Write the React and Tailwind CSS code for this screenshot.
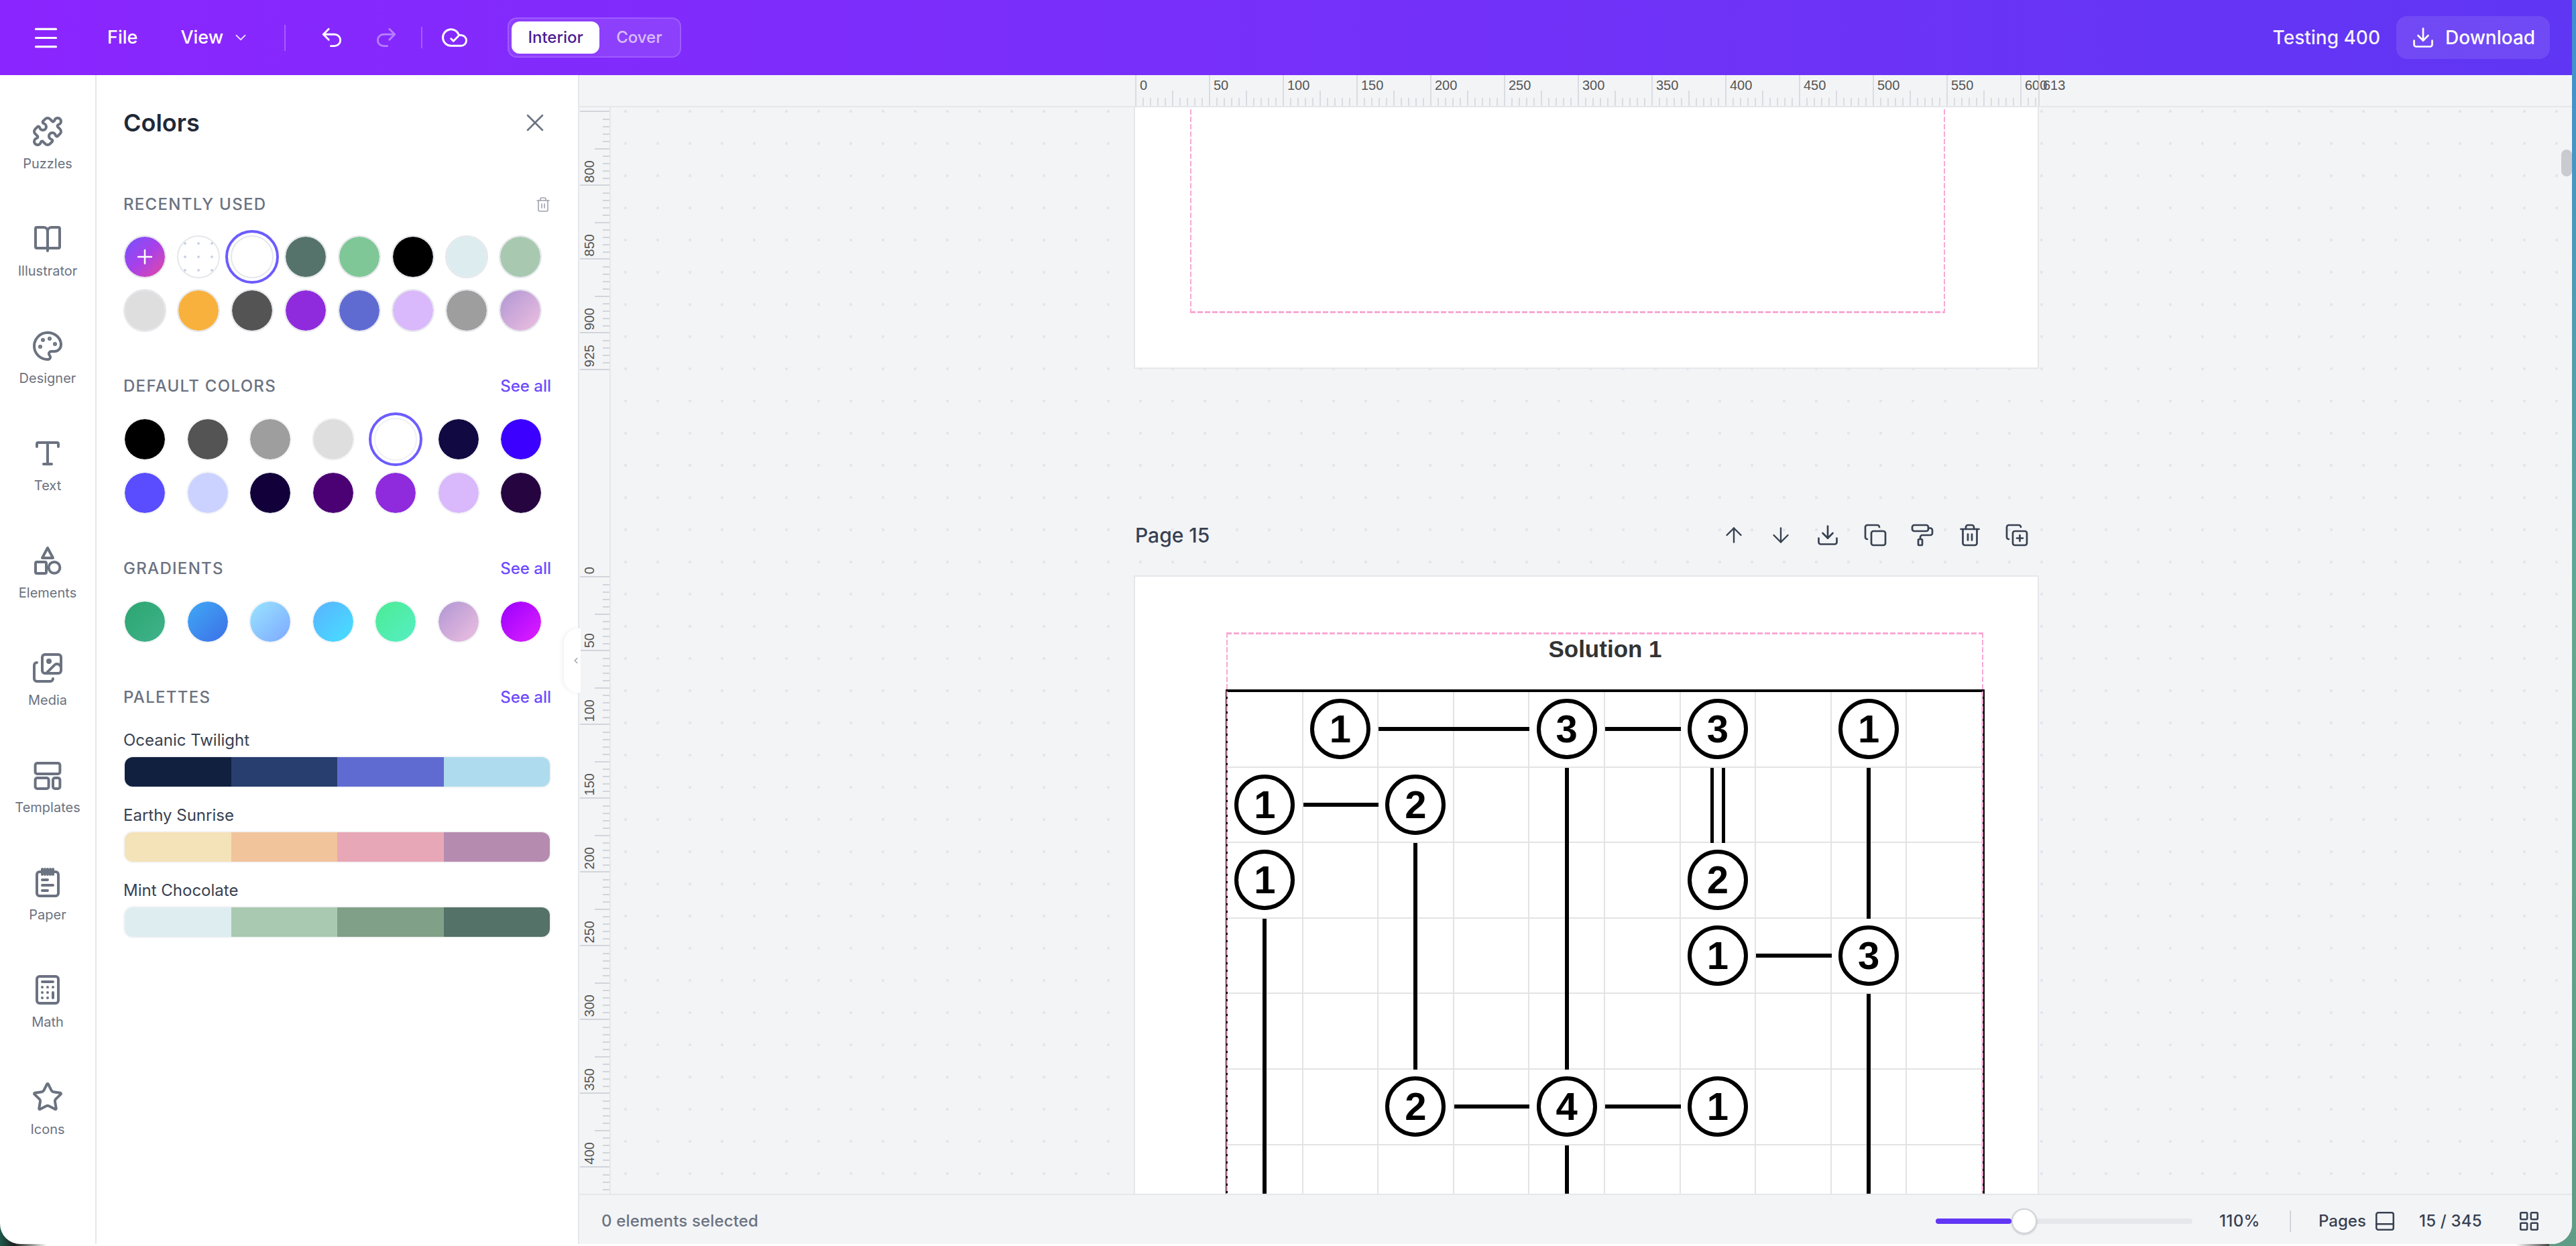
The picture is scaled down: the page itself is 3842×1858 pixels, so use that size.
import React from "react";
import {
  Menu, ChevronDown, Undo2, Redo2, Download, X, Trash2, Plus, Puzzle, Palette, Type, Images, Calculator, Star,
  ArrowUp, ArrowDown, PaintRoller, CopyPlus, Copy, PanelBottom, LayoutGrid, ChevronLeft,
} from "lucide-react";

const Svg = ({ size = 48, sw = 2, children }) => (
  <svg width={size} height={size} viewBox="0 0 24 24" fill="none" stroke="currentColor" strokeWidth={sw} strokeLinecap="round" strokeLinejoin="round">
    {children}
  </svg>
);
const BookIcon = () => (
  <Svg>
    <path d="M12 6.5V21" />
    <path d="M4 3.5h5a3 3 0 0 1 3 3 3 3 0 0 1 3-3h5a1 1 0 0 1 1 1V18a1 1 0 0 1-1 1H4a1 1 0 0 1-1-1V4.5a1 1 0 0 1 1-1z" />
  </Svg>
);
const ElementsIcon = () => (
  <Svg>
    <path d="M12 2.5 16 10H8z" />
    <rect x="3" y="13" width="8" height="8.5" rx="1" />
    <circle cx="17" cy="17.2" r="4.2" />
  </Svg>
);
const TemplatesIcon = () => (
  <Svg>
    <rect x="2.8" y="3" width="18.4" height="8" rx="1.5" />
    <rect x="2.8" y="14" width="10" height="8" rx="1.5" />
    <rect x="16" y="14" width="5.2" height="8" rx="1.5" />
  </Svg>
);
const PaperIcon = () => (
  <Svg>
    <rect x="4" y="4" width="16" height="18" rx="2" />
    <path d="M8 2v4M12 2v4M16 2v4M10 2v4M14 2v4" />
    <path d="M8 10h4M8 14h8M8 18h4" />
  </Svg>
);
const CloudCheckIcon = () => (
  <Svg size={42} sw={1.7}>
    <path d="M17.5 19H9a7 7 0 1 1 6.71-9h1.79a4.5 4.5 0 1 1 0 9Z" />
    <path d="m9 13 2 2 4-4" />
  </Svg>
);

const sideItems = [
  ["Puzzles", <Puzzle size={48} strokeWidth={2} />],
  ["Illustrator", <BookIcon />],
  ["Designer", <Palette size={48} strokeWidth={2} />],
  ["Text", <Type size={48} strokeWidth={2} />],
  ["Elements", <ElementsIcon />],
  ["Media", <Images size={48} strokeWidth={2} />],
  ["Templates", <TemplatesIcon />],
  ["Paper", <PaperIcon />],
  ["Math", <Calculator size={48} strokeWidth={2} />],
  ["Icons", <Star size={48} strokeWidth={2} />],
];

const Swatch = ({ c, g, faint }) => (
  <div
    className={`h-[64px] w-[64px] rounded-full border-2 ${faint ? "border-[#f3f4f6]" : "border-[#e5e7eb]"}`}
    style={{ background: g ? `linear-gradient(135deg, ${g[0]}, ${g[1]})` : c, backgroundClip: "padding-box" }}
  />
);
const Selected = ({ faint }) => (
  <div className="relative h-[64px] w-[64px]">
    <div className="absolute -inset-[8px] rounded-full border-[4px] border-[#6c5cff]" />
    <div className={`h-[64px] w-[64px] rounded-full border-2 bg-white ${faint ? "border-[#f0f1f5]" : "border-[#e5e7eb]"}`} />
  </div>
);

const recent2 = ["#dedede", "#f8b13c", "#545454", "#8f2bdc", "#606bd2", "#d9b8fb", "#9e9e9e"];
const recent1 = ["#55736a", "#7fc797", "#000000", "#dcecef", "#a8c9b0"];
const def1 = ["#000000", "#545454", "#9e9e9e", "#dedede", null, "#110a42", "#3b00ff"];
const def2 = ["#5a4dff", "#cbd2ff", "#12003a", "#4b0074", "#8f2bdc", "#d9b8fb", "#26043f"];
const grads = [
  ["#2ca56f", "#40b38c"], ["#3fa9f5", "#3d6fe8"], ["#9ae5ff", "#7da9ff"], ["#5ab2ff", "#45e0ff"],
  ["#4ceb94", "#55efc4"], ["#b096d4", "#eec0e0"], ["#9900ff", "#e020ff"],
];
const palettes = [
  ["Oceanic Twilight", ["#11203f", "#283e6f", "#606bd2", "#aedbed"]],
  ["Earthy Sunrise", ["#f4e2b8", "#f1c49c", "#e8a7b6", "#b58caf"]],
  ["Mint Chocolate", ["#deedf0", "#a9c9b0", "#80a187", "#557268"]],
];

const SectionHead = ({ title, className, right }) => (
  <div className={`flex h-[32px] items-center justify-between ${className}`}>
    <span className="text-[24px] font-medium uppercase leading-[32px] tracking-[1.3px] text-[#6b7280]">{title}</span>
    {right === undefined ? <span className="text-[24px] font-medium leading-[32px] text-[#6d4aff]">See all</span> : right}
  </div>
);

const TOP_CELLS = [0, 50, 100, 150, 200, 250, 300, 350, 400, 450, 500, 550, 600];
const HCell = ({ label, w = 110, ticks = true }) => (
  <div className="relative h-[46px] shrink-0" style={{ width: w }}>
    <svg className="absolute inset-0" width={Math.max(w, 2)} height="46" stroke="#d1d5db" strokeWidth="1.5">
      <line x1="1" y1="0" x2="1" y2="46" />
      {ticks && [11, 22, 33, 44, 55, 66, 77, 88, 99].map((x) => (
        <line key={x} x1={x + 1} x2={x + 1} y1={x === 55 ? 23 : 34} y2="46" />
      ))}
    </svg>
    <span className="absolute left-[7px] top-[3px] text-[20px] leading-[24px] text-[#555] [font-family:'Liberation_Sans',sans-serif]">{label}</span>
  </div>
);
const VCell = ({ label, h = 110, ticks = true, major = true }) => {
  const ys = [];
  if (ticks) for (let y = 11; y < Math.min(h, 110) - 1; y += 11) ys.push(y);
  return (
    <div className="relative w-[45px] shrink-0 overflow-hidden" style={{ height: h }}>
      <svg className="absolute inset-0" width="45" height={h} stroke="#d1d5db" strokeWidth="2">
        {ys.map((y) => (
          <line key={y} x1={y === 55 ? 23 : 35} x2="45" y1={y} y2={y} />
        ))}
        {major && <line x1="1" x2="45" y1={h - 1} y2={h - 1} />}
      </svg>
      {label && (
        <span className="absolute bottom-[5px] left-[5px] rotate-180 text-[20px] leading-[20px] text-[#555] [writing-mode:vertical-rl] [font-family:'Liberation_Sans',sans-serif]">
          {label}
        </span>
      )}
    </div>
  );
};

/* the page-margin guides: pink dashes with long strokes */
const GuideV = ({ className }) => (
  <div className={`absolute w-[2px] bg-[repeating-linear-gradient(to_bottom,#f9a8d4_0,#f9a8d4_8px,transparent_8px,transparent_11px)] ${className}`} />
);
const GuideH = ({ className }) => (
  <div className={`absolute h-[3px] bg-[repeating-linear-gradient(to_right,#f9a8d4_0,#f9a8d4_8px,transparent_8px,transparent_11px)] ${className}`} />
);

const Node = ({ n }) => (
  <div className="absolute left-1/2 top-1/2 z-10 flex h-[90px] w-[90px] -translate-x-1/2 -translate-y-1/2 items-center justify-center rounded-full border-[6px] border-black bg-white text-[58px] font-bold leading-none text-black [font-family:'Liberation_Sans',sans-serif]">
    {n}
  </div>
);
const H = () => <div className="absolute left-0 -right-[2px] top-1/2 h-[6px] -translate-y-1/2 bg-black" />;
const V = () => <div className="absolute -bottom-[2px] top-0 left-1/2 w-[6px] -translate-x-1/2 bg-black" />;
const VV = () => (
  <div className="absolute -bottom-[2px] top-0 left-1/2 flex w-[22px] -translate-x-1/2 justify-between">
    <div className="w-[5px] bg-black" />
    <div className="w-[5px] bg-black" />
  </div>
);

const rows = [
  [".", 1, "h", "h", 3, "h", 3, ".", 1, "."],
  [1, "h", 2, ".", "v", ".", "w", ".", "v", "."],
  [1, ".", "v", ".", "v", ".", 2, ".", "v", "."],
  ["v", ".", "v", ".", "v", ".", 1, "h", 3, "."],
  ["v", ".", "v", ".", "v", ".", ".", ".", "v", "."],
  ["v", ".", 2, "h", 4, "h", 1, ".", "v", "."],
  ["v", ".", ".", ".", "v", ".", ".", ".", "v", "."],
  ["v", ".", ".", ".", "v", ".", ".", ".", "v", "."],
];

const Cell = ({ t }) => (
  <div className="relative h-[112.6px] border-b-2 border-r-2 border-[#e3e3e3]">
    {typeof t === "number" && <Node n={t} />}
    {t === "h" && <H />}
    {t === "v" && <V />}
    {t === "w" && <VV />}
  </div>
);

export default function App() {
  return (
    <div className="relative h-[1858px] w-[3842px] overflow-hidden bg-white [font-family:Inter,sans-serif]">
      {/* desktop showing round the window's edge */}
      <div className="absolute bottom-0 left-0 h-[40px] w-full bg-[linear-gradient(to_right,#1f5a4c_0,#1c1c1c_22px,#ffffff_70px,#ffffff_calc(100%-90px),#1c1c1c_calc(100%-30px),#1c1c1c_100%)]" />
      <div className="absolute right-0 top-0 h-full w-[40px] bg-gradient-to-b from-[#3f8fd2] via-[#62a88f] to-[#5f9c86]" />

      <div className="relative flex h-[1855px] w-[3836px] flex-col overflow-hidden rounded-b-[30px] bg-white">
        {/* top bar */}
        <header className="flex h-[112px] shrink-0 items-center bg-gradient-to-r from-[#8b25ff] to-[#5f36f3] text-white">
          <div className="ml-[46px] flex h-[45px] w-[45px] items-center justify-center">
            <Menu size={45} strokeWidth={1.7} />
          </div>
          <span className="ml-[69px] text-[27px] font-medium">File</span>
          <span className="ml-[64px] text-[27px] font-medium">View</span>
          <ChevronDown className="ml-[13px] opacity-80" size={26} strokeWidth={1.8} />
          <div className="ml-[52px] h-[39px] w-[2px] bg-white/25" />
          <Undo2 className="ml-[50px]" size={38} strokeWidth={1.8} />
          <Redo2 className="ml-[43px] opacity-40" size={38} strokeWidth={1.8} />
          <div className="ml-[33px] h-[32px] w-[2px] bg-white/25" />
          <div className="ml-[27px]"><CloudCheckIcon /></div>
          <div className="ml-[58px] flex h-[60px] w-[259px] items-center rounded-[14px] border-2 border-white/15 bg-white/10 pl-[4px]">
            <div className="flex h-[48px] w-[131px] items-center justify-center rounded-[12px] bg-white text-[24px] font-medium text-[#4c1d95]">Interior</div>
            <span className="ml-[25px] text-[24px] font-medium text-white/65">Cover</span>
          </div>
          <span className="ml-auto text-[28px] font-medium text-white/95">Testing 400</span>
          <button className="ml-[24px] mr-[33px] flex h-[64px] w-[229px] items-center rounded-[16px] bg-white/10 pl-[22px] text-[28px] font-medium">
            <Download size={36} strokeWidth={1.8} />
            <span className="ml-[15px]">Download</span>
          </button>
        </header>

        <main className="flex min-h-0 flex-1">
          {/* left rail */}
          <aside className="flex w-[144px] shrink-0 flex-col items-center gap-[74px] border-r-2 border-[#e5e7eb] pt-[60px] text-[#6b7280]">
            {sideItems.map(([label, icon]) => (
              <div key={label} className="flex flex-col items-center gap-[10px]">
                <div className="h-[48px] w-[48px]">{icon}</div>
                <span className="text-[20px] font-normal leading-[28px]">{label}</span>
              </div>
            ))}
          </aside>

          {/* colours panel */}
          <section className="relative w-[718px] shrink-0 pl-[40px] pr-[40px] pt-[49px]">
            <div className="flex h-[44px] items-center justify-between">
              <h2 className="text-[36px] font-semibold leading-[44px] text-[#1f2937]">Colors</h2>
              <X className="mr-[2px] text-[#6b7280]" size={44} strokeWidth={1.4} />
            </div>

            <SectionHead className="mt-[84px]" title="Recently used" right={<Trash2 className="text-[#9ca3af]" size={24} strokeWidth={1.6} />} />
            <div className="mt-[30px] grid grid-cols-[repeat(8,64px)] gap-[16px]">
              <div className="flex h-[64px] w-[64px] items-center justify-center rounded-full border-2 border-[#e5e7eb] bg-gradient-to-br from-[#7050ff] via-[#a83fe8] to-[#e63fa0] bg-clip-padding text-white">
                <Plus size={34} strokeWidth={1.8} />
              </div>
              <div className="h-[64px] w-[64px] rounded-full border-2 border-[#e5e7eb] bg-white bg-[radial-gradient(circle,#c4cfe6_1.5px,transparent_2px)] bg-[length:20px_20px]" />
              <Selected />
              {recent1.map((c) => <Swatch key={c} c={c} />)}
              {recent2.map((c) => <Swatch key={c} c={c} />)}
              <Swatch g={["#b096d4", "#eec0e0"]} />
            </div>

            <SectionHead className="mt-[65px]" title="Default colors" />
            <div className="mt-[31px] grid grid-cols-[repeat(7,64px)] justify-between gap-y-[16px] pr-[13px]">
              {def1.map((c, i) => (c ? <Swatch key={i} c={c} faint /> : <Selected key={i} faint />))}
              {def2.map((c, i) => <Swatch key={i} c={c} faint />)}
            </div>

            <SectionHead className="mt-[65px]" title="Gradients" />
            <div className="mt-[31px] grid grid-cols-[repeat(7,64px)] justify-between pr-[13px]">
              {grads.map((g, i) => <Swatch key={i} g={g} faint />)}
            </div>

            <SectionHead className="mt-[65px]" title="Palettes" />
            <div className="mt-[32px] flex flex-col gap-[25px]">
              {palettes.map(([name, cols]) => (
                <div key={name}>
                  <div className="text-[24px] leading-[32px] text-[#374151]">{name}</div>
                  <div className="mt-[7px] flex h-[48px] overflow-hidden rounded-[14px] border-2 border-[#f3f4f6]">
                    {cols.map((c) => <div key={c} className="flex-1" style={{ background: c }} />)}
                  </div>
                </div>
              ))}
            </div>

            <div className="absolute -right-[4px] top-[825px] z-20 flex h-[96px] w-[25px] items-center justify-end rounded-l-[22px] bg-white text-[#9ca3af] shadow-[-3px_0_6px_rgba(0,0,0,0.05)]">
              <ChevronLeft size={14} strokeWidth={2.5} />
            </div>
          </section>

          {/* work area */}
          <section className="relative flex min-w-0 flex-1 flex-col bg-[#f3f4f6]">
            <div className="flex h-[48px] shrink-0 border-b-2 border-l-2 border-[#e5e7eb]">
              <div className="flex pl-[829px]">
                {TOP_CELLS.map((n) => <HCell key={n} label={n} w={n === 600 ? 27 : 110} />)}
                <HCell label="613" w={2} ticks={false} />
              </div>
            </div>

            <div className="flex min-h-0 flex-1">
              <div className="w-[49px] shrink-0 overflow-hidden border-x-2 border-[#e5e7eb]">
                <VCell h={7} ticks={false} />
                <VCell label="800" />
                <VCell label="850" />
                <VCell label="900" />
                <VCell label="925" h={55} />
                <VCell label="0" h={309} ticks={false} />
                {[50, 100, 150, 200, 250, 300, 350, 400].map((n) => <VCell key={n} label={n} />)}
                <VCell h={39} major={false} />
              </div>

              <div className="min-w-0 flex-1 overflow-hidden bg-[radial-gradient(circle,#e3e6ec_2px,transparent_2.5px)] bg-[length:48px_48px] bg-[position:-2px_-18px] pl-[780px]">
                {/* page 14 tail */}
                <div className="h-[390px] w-[1350px] border-x-2 border-b-2 border-[#e5e7eb] bg-white pl-[82px]">
                  <div className="relative h-[307px] w-[1126px]">
                    <GuideV className="bottom-0 left-0 top-[3px]" />
                    <GuideV className="bottom-0 right-0 top-[3px]" />
                    <GuideH className="bottom-0 left-0 right-0" />
                  </div>
                </div>

                {/* page 15 toolbar */}
                <div className="mt-[216px] flex h-[64px] w-[1350px] items-center justify-between pl-[2px] pr-[15px]">
                  <span className="text-[30px] font-medium text-[#374151]">Page 15</span>
                  <div className="flex items-center gap-[34.4px] text-[#374151]">
                    <ArrowUp size={36} strokeWidth={1.6} />
                    <ArrowDown size={36} strokeWidth={1.6} />
                    <Download size={36} strokeWidth={1.8} />
                    <Copy size={36} strokeWidth={1.8} />
                    <PaintRoller size={36} strokeWidth={1.8} />
                    <Trash2 size={36} strokeWidth={1.8} />
                    <CopyPlus size={36} strokeWidth={1.8} />
                  </div>
                </div>

                {/* page 15 */}
                <div className="mt-[28px] w-[1350px] border-2 border-[#e5e7eb] bg-white pl-[135px] pt-[83px]">
                  <div className="relative w-[1132px]">
                    <GuideH className="left-[1px] right-[2px] top-0" />
                    <GuideV className="bottom-0 left-[1px] top-0 z-20" />
                    <GuideV className="bottom-0 right-[2px] top-0 z-20" />
                    <div className="h-[85px] pt-[5px] text-center text-[35px] font-bold leading-[40px] text-[#333] [font-family:'Liberation_Sans',sans-serif]">
                      Solution 1
                    </div>
                    <div className="grid grid-cols-[repeat(10,112.6px)] border-x-[3px] border-t-[4px] border-black">
                      {rows.flat().map((t, i) => <Cell key={i} t={t} />)}
                    </div>
                  </div>
                </div>
              </div>
            </div>

            {/* status bar */}
            <footer className="flex h-[75px] shrink-0 items-center border-l-2 border-t-2 border-[#e5e7eb] pl-[33px] pr-[47px] pt-[4px] text-[24px] text-[#374151]">
              <span className="font-medium tracking-[0.15px] text-[#6b7280]">0 elements selected</span>
              <div className="relative ml-auto h-[8px] w-[383px] rounded-full bg-[#e5e7eb]">
                <div className="h-[8px] w-[113px] rounded-full bg-[#6236f5]" />
                <div className="absolute -top-[15px] left-[113px] h-[38px] w-[38px] rounded-full border-2 border-[#d1d5db] bg-white shadow-[0_1px_3px_rgba(0,0,0,0.2)]" />
              </div>
              <span className="ml-[40px] w-[63px] whitespace-nowrap font-medium tracking-[0.4px]">110%</span>
              <div className="ml-[42px] h-[32px] w-[2px] bg-[#d1d5db]" />
              <span className="ml-[41px] w-[70px] whitespace-nowrap font-medium">Pages</span>
              <PanelBottom className="ml-[12px]" size={34} strokeWidth={1.8} />
              <span className="ml-[34px] w-[95px] whitespace-nowrap font-medium tracking-[0.2px]">15 / 345</span>
              <LayoutGrid className="ml-[52px]" size={34} strokeWidth={1.8} />
            </footer>

            <div className="absolute right-0 top-[111px] h-[40px] w-[16px] rounded-full bg-[#c9cbd1]" />
          </section>
        </main>
      </div>
    </div>
  );
}
